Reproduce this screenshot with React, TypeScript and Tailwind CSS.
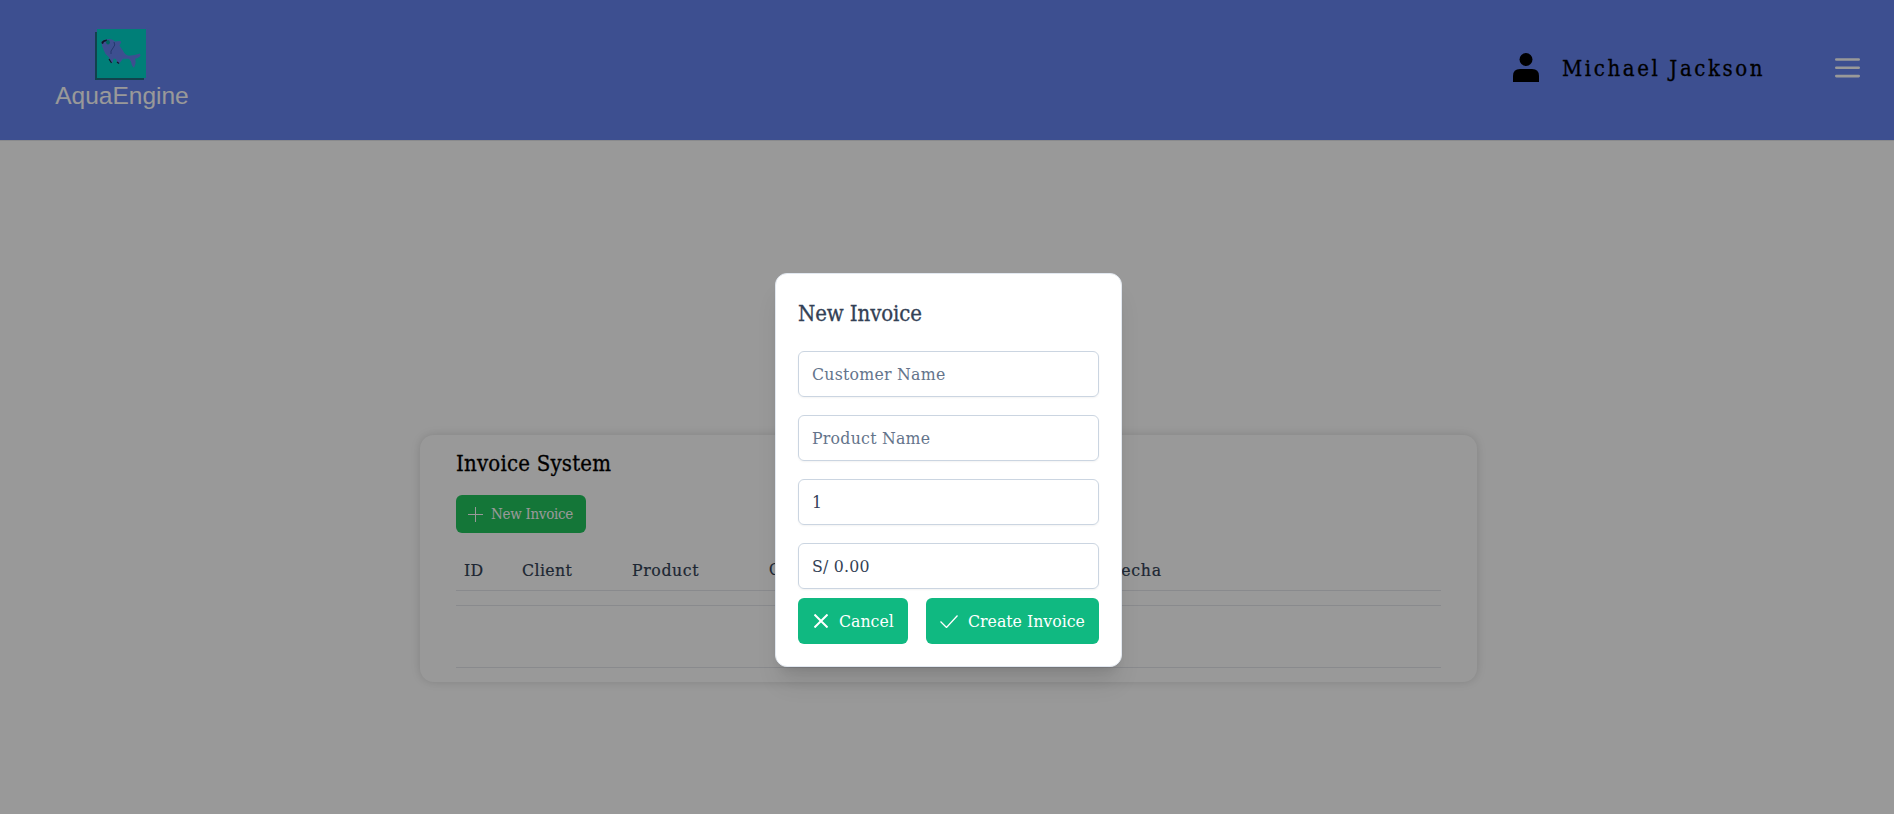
import type { ReactNode } from "react";

function Logo() {
  return (
    <div className="ml-[54px] mt-[29px] flex w-[136px] flex-col items-center">
      <svg width="51" height="52" viewBox="0 0 51 52" className="ml-[-4px] block">
        <path d="M0 3h49v48H0z" fill="#1f6f80" />
        <path d="M2 0h49v49H2z" fill="#00d4c8" />
        <path d="M6.5 13Q8 10.5 11 10.5Q15 9.5 18 11L20 12.5L25 12Q26.5 12 26 13.5L24.5 16.7L28 21.7Q30 26 34 26.7Q40 26.5 45 24.5Q46 27 44.5 27.7Q42 29.5 40 29.7Q41 32 40.5 34.5L39 38.7Q37 38 36 32.5L34 29.7H28L24 34.7Q22 34 21 30L18.5 29.5Q18 33 17 34.5L13.5 27.7Q9.5 24.5 9 21.7Q6.5 17 6.5 13Z" fill="#6784f0" />
        <path d="M6.5 13Q8 10.5 12 10.4L12 12L9 13L8 15L6.7 14.5Z" fill="#1b2440" />
        <ellipse cx="13" cy="13.3" rx="1.9" ry="2.3" fill="#00a89f" />
        <path d="M19 13q2 3-1 6t-2 6" fill="none" stroke="#3a5fb4" strokeWidth="1" />
        <path d="M14 30l2.5 4M22 33l2 1.5" fill="none" stroke="#1b2440" strokeWidth="1.2" />
      </svg>
      <span className="mt-[1px] font-['Liberation_Sans'] text-[24.5px] leading-[28px] text-white">AquaEngine</span>
    </div>
  );
}

function Field({ children, className = "" }: { children: ReactNode; className?: string }) {
  return (
    <div className={`flex h-[46px] items-center rounded-md border border-[#cbd5e1] pl-[13px] text-[17.5px] tracking-[0.25px] shadow-[0_1px_2px_rgba(18,18,23,0.05)] ${className}`}>
      {children}
    </div>
  );
}

export default function App() {
  return (
    <div className="relative h-[814px] w-full overflow-hidden bg-white font-['DejaVu_Serif_Condensed','DejaVu_Serif',serif] whitespace-nowrap">
      <header className="flex h-[140px] bg-[#6784f0] shadow-[0_1px_0_#e5e7eb]">
        <Logo />
        <div className="mt-[50px] mr-[34px] ml-auto flex h-[36px] items-center">
          <svg width="26" height="29" viewBox="0 0 26 29" className="mt-[-1px] block">
            <circle cx="13" cy="6.5" r="6.5" />
            <path d="M0 29V23q0-7 7-7h12q7 0 7 7v6z" />
          </svg>
          <span className="ml-[23px] w-[202px] text-[22px] tracking-[2.6px] [-webkit-text-stroke:0.3px]">Michael Jackson</span>
          <svg width="25" height="20" viewBox="0 0 25 20" className="ml-[71px] block" stroke="#fff" strokeWidth="2.6" strokeLinecap="round">
            <path d="M1.3 1.5h22.4M1.3 9.8h22.4M1.3 18.1h22.4" />
          </svg>
        </div>
      </header>
      <main className="mt-[295px] ml-[420px] h-[247px] w-[1057px] rounded-[14px] px-9 pt-[14px] shadow-[0_0_10px_rgba(0,0,0,0.15)]">
        <h1 className="h-[30px] text-[22px] leading-[30px] tracking-[0.2px] [-webkit-text-stroke:0.3px]">Invoice System</h1>
        <button className="mt-[16px] flex h-[38px] w-[130px] items-center rounded-md bg-[#22c55e] pl-3 text-[15px] tracking-[-0.3px] text-white">
          <svg width="15" height="15" viewBox="0 0 15 15" className="mr-[8px]" stroke="currentColor">
            <path d="M7.5 0v15M0 7.5h15" />
          </svg>
          New Invoice
        </button>
        <div className="mt-[17px] grid h-[41px] grid-cols-[58px_110px_137px_338px_1fr] items-center border-b border-[#e5e7eb] pl-2 text-[17.5px] tracking-[0.4px] text-[#334155] [-webkit-text-stroke:0.2px]">
          <span>ID</span>
          <span>Client</span>
          <span className="tracking-[0.6px]">Product</span>
          <span className="text-[16px] tracking-[-0.8px]">Cant</span>
          <span className="w-[55px] text-right tracking-[0.8px]">Fecha</span>
        </div>
        <div className="h-[15px] border-b border-[#e5e7eb]" />
        <div className="h-[62px] border-b border-[#e5e7eb]" />
      </main>
      <div className="absolute inset-0 bg-black/40 pt-[273px]">
        <section className="ml-[775px] h-[394px] w-[347px] rounded-xl border border-[#e2e8f0] bg-white px-[22px] pt-[22px] text-[#334155] shadow-[0_20px_25px_-5px_rgba(0,0,0,0.1),0_8px_10px_-6px_rgba(0,0,0,0.1)]">
          <h2 className="h-[34px] text-[22px] leading-[36px] tracking-[-0.1px] [-webkit-text-stroke:0.3px]">New Invoice</h2>
          <div className="mt-[21px] flex flex-col gap-[18px]">
            <Field className="text-[#64748b]">Customer Name</Field>
            <Field className="text-[#64748b]">Product Name</Field>
            <Field>1</Field>
            <Field>S/ 0.00</Field>
          </div>
          <div className="mt-[9px] flex h-[46px] gap-[18px] text-[17.5px] text-white">
            <button className="flex w-[110px] items-center rounded-md bg-[#10b981] pl-4">
              <svg width="14" height="14" viewBox="0 0 14 14" className="mr-[11px]" stroke="currentColor" strokeWidth="2">
                <path d="M.5.5l13 13M13.5.5l-13 13" />
              </svg>
              Cancel
            </button>
            <button className="flex w-[173px] items-center rounded-md bg-[#10b981] pl-[14px]">
              <svg width="18" height="13" viewBox="0 0 18 13" className="mr-[10px]" fill="none" stroke="currentColor" strokeWidth="1.3">
                <path d="M.5 6.5l6 6L17.5.5" />
              </svg>
              Create Invoice
            </button>
          </div>
        </section>
      </div>
    </div>
  );
}
